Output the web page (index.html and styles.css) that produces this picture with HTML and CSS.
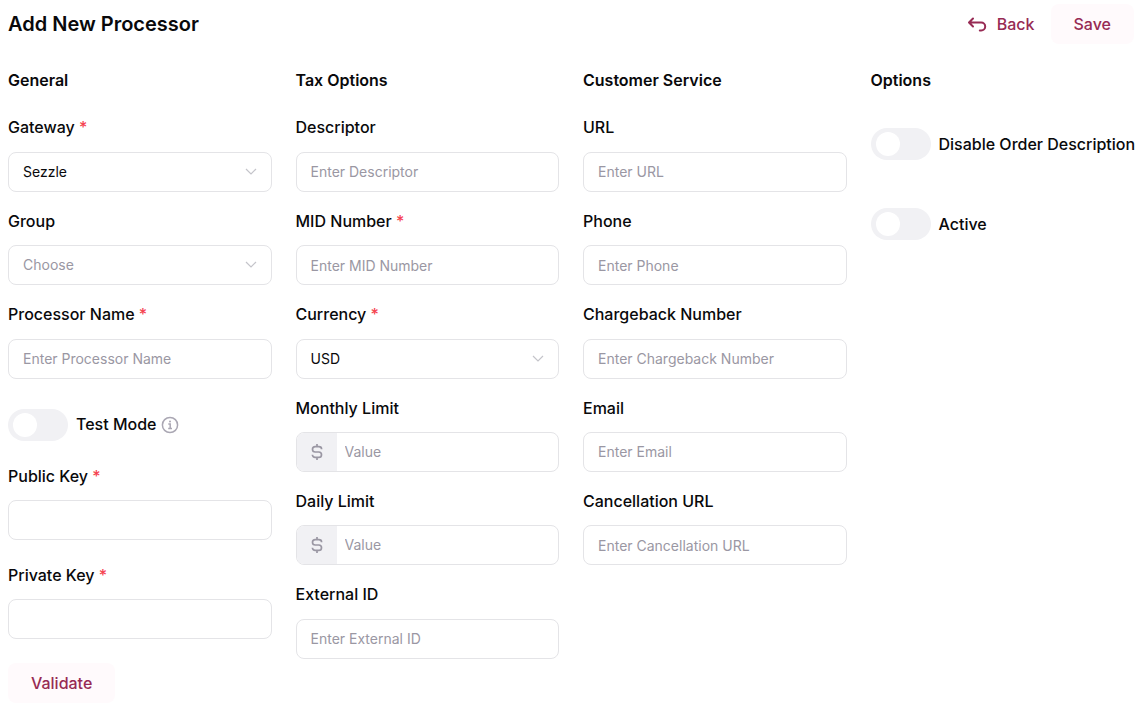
FILE: index.html
```html
<!DOCTYPE html>
<html lang="en">
<head>
<meta charset="utf-8">
<meta name="viewport" content="width=device-width, initial-scale=1">
<title>Add New Processor</title>
<link rel="stylesheet" href="styles.css">
</head>
<body>
<form class="page">
  <header class="topbar">
    <h1 class="title">Add New Processor</h1>
    <div class="actions">
      <button type="button" class="btn btn-back">
        <svg class="icon-back" viewBox="0 0 20 20" aria-hidden="true"><path d="M6 4.5 2 8.5l4 4M2.4 8.5h11.8a4 4 0 0 1 0 8H12.8"/></svg>
        Back
      </button>
      <button type="submit" class="btn btn-soft">Save</button>
    </div>
  </header>

  <main class="columns">
    <section class="column">
      <h2 class="heading">General</h2>
      <div class="field">
        <label class="label" for="gateway">Gateway <span class="required">*</span></label>
        <div class="select-wrap">
          <select class="control select" id="gateway"><option>Sezzle</option></select>
          <svg class="chevron" viewBox="0 0 12 8" aria-hidden="true"><path d="m1 1 5 5 5-5"/></svg>
        </div>
      </div>
      <div class="field">
        <label class="label" for="group">Group</label>
        <div class="select-wrap">
          <select class="control select select-empty" id="group"><option value="">Choose</option></select>
          <svg class="chevron" viewBox="0 0 12 8" aria-hidden="true"><path d="m1 1 5 5 5-5"/></svg>
        </div>
      </div>
      <div class="field">
        <label class="label" for="name">Processor Name <span class="required">*</span></label>
        <input class="control" id="name" type="text" placeholder="Enter Processor Name">
      </div>
      <div class="keys">
        <div class="toggle-row">
          <input class="toggle" id="test-mode" type="checkbox" role="switch">
          <label for="test-mode">Test Mode</label>
          <svg class="icon-info" viewBox="0 0 18 18" aria-hidden="true"><circle cx="9" cy="9" r="7.6"/><path d="M7.3 8h1.9v4.3M7.2 12.4h3.8"/><circle class="dot" cx="9" cy="5.5" r="1"/></svg>
        </div>
        <div class="field">
          <label class="label" for="public-key">Public Key <span class="required">*</span></label>
          <input class="control" id="public-key" type="text">
        </div>
        <div class="field">
          <label class="label" for="private-key">Private Key <span class="required">*</span></label>
          <input class="control" id="private-key" type="text">
        </div>
        <button type="button" class="btn btn-soft">Validate</button>
      </div>
    </section>

    <section class="column">
      <h2 class="heading">Tax Options</h2>
      <div class="field">
        <label class="label" for="descriptor">Descriptor</label>
        <input class="control" id="descriptor" type="text" placeholder="Enter Descriptor">
      </div>
      <div class="field">
        <label class="label" for="mid">MID Number <span class="required">*</span></label>
        <input class="control" id="mid" type="text" placeholder="Enter MID Number">
      </div>
      <div class="field">
        <label class="label" for="currency">Currency <span class="required">*</span></label>
        <div class="select-wrap">
          <select class="control select" id="currency"><option>USD</option></select>
          <svg class="chevron" viewBox="0 0 12 8" aria-hidden="true"><path d="m1 1 5 5 5-5"/></svg>
        </div>
      </div>
      <div class="field">
        <label class="label" for="monthly">Monthly Limit</label>
        <div class="control money">
          <span class="prefix"><svg class="icon-dollar" viewBox="0 0 12 18" aria-hidden="true"><path d="M6 1v2.6M6 14.4V17M10.6 6.2c0-1.5-1.2-2.6-2.7-2.6H4.2a2.7 2.7 0 0 0 0 5.4h3.6a2.7 2.7 0 0 1 0 5.4H4.1c-1.5 0-2.7-1.1-2.7-2.6"/></svg></span>
          <input class="money-input" id="monthly" type="text" placeholder="Value">
        </div>
      </div>
      <div class="field">
        <label class="label" for="daily">Daily Limit</label>
        <div class="control money">
          <span class="prefix"><svg class="icon-dollar" viewBox="0 0 12 18" aria-hidden="true"><path d="M6 1v2.6M6 14.4V17M10.6 6.2c0-1.5-1.2-2.6-2.7-2.6H4.2a2.7 2.7 0 0 0 0 5.4h3.6a2.7 2.7 0 0 1 0 5.4H4.1c-1.5 0-2.7-1.1-2.7-2.6"/></svg></span>
          <input class="money-input" id="daily" type="text" placeholder="Value">
        </div>
      </div>
      <div class="field">
        <label class="label" for="external">External ID</label>
        <input class="control" id="external" type="text" placeholder="Enter External ID">
      </div>
    </section>

    <section class="column">
      <h2 class="heading">Customer Service</h2>
      <div class="field">
        <label class="label" for="url">URL</label>
        <input class="control" id="url" type="text" placeholder="Enter URL">
      </div>
      <div class="field">
        <label class="label" for="phone">Phone</label>
        <input class="control" id="phone" type="text" placeholder="Enter Phone">
      </div>
      <div class="field">
        <label class="label" for="chargeback">Chargeback Number</label>
        <input class="control" id="chargeback" type="text" placeholder="Enter Chargeback Number">
      </div>
      <div class="field">
        <label class="label" for="email">Email</label>
        <input class="control" id="email" type="text" placeholder="Enter Email">
      </div>
      <div class="field">
        <label class="label" for="cancel-url">Cancellation URL</label>
        <input class="control" id="cancel-url" type="text" placeholder="Enter Cancellation URL">
      </div>
    </section>

    <section class="column">
      <h2 class="heading">Options</h2>
      <div class="options">
        <div class="toggle-row">
          <input class="toggle" id="disable-desc" type="checkbox" role="switch">
          <label for="disable-desc">Disable Order Description</label>
        </div>
        <div class="toggle-row">
          <input class="toggle" id="active" type="checkbox" role="switch">
          <label for="active">Active</label>
        </div>
      </div>
    </section>
  </main>
</form>
</body>
</html>
```
FILE: styles.css
```css
*,
*::before {
  box-sizing: border-box;
}

body {
  margin: 0;
  background: #fff;
  color: #09090b;
  font: 500 16px/1.4 Inter, "Liberation Sans", sans-serif;
}

.page {
  padding: 4px 6px 4px 8px;
}

.topbar,
.actions {
  display: flex;
  align-items: center;
}

.topbar {
  justify-content: space-between;
}

.title,
.heading {
  margin: 0;
  font-weight: 600;
}

.title {
  font-size: 20px;
}

.heading {
  margin-bottom: 7px;
  font-size: 16px;
}

.btn {
  height: 40px;
  padding: 0 23px;
  border: 0;
  border-radius: 8px;
  background: none;
  color: #972b54;
  font: inherit;
  cursor: pointer;
}

.btn-soft {
  background: #fffafc;
}

.btn-back {
  display: flex;
  align-items: center;
  gap: 10px;
  padding: 0 16px;
}

.icon-back {
  width: 20px;
  height: 20px;
  fill: none;
  stroke: currentColor;
  stroke-width: 2;
  stroke-linecap: round;
  stroke-linejoin: round;
}

.columns {
  display: grid;
  grid-template-columns: repeat(4, minmax(0, 1fr));
  gap: 24px;
  margin-top: 25px;
}

.column {
  display: flex;
  flex-direction: column;
  gap: 18px;
}

.field {
  display: flex;
  flex-direction: column;
  gap: 13px;
}

.required {
  color: #f5424f;
}

.control {
  width: 100%;
  height: 40px;
  padding: 0 14px;
  border: 1px solid #e4e4e7;
  border-radius: 8px;
  background: #fff;
  color: inherit;
  font: 400 14px/20px Inter, "Liberation Sans", sans-serif;
}

::placeholder {
  color: #9a97a3;
  opacity: 1;
}

.select-wrap {
  display: grid;
  align-items: center;
}

.select-wrap > * {
  grid-area: 1 / 1;
}

.select {
  appearance: none;
}

.select-empty {
  color: #9a97a3;
}

.chevron {
  justify-self: end;
  width: 12px;
  height: 8px;
  margin-right: 15px;
  fill: none;
  stroke: #c4c4ca;
  stroke-width: 1.2;
  pointer-events: none;
}

.money {
  display: flex;
  padding: 0;
  overflow: hidden;
}

.prefix {
  display: grid;
  flex: none;
  place-items: center;
  width: 40px;
  background: #f1f1f4;
}

.icon-dollar {
  width: 12px;
  height: 18px;
  fill: none;
  stroke: #9a97a3;
  stroke-width: 1.7;
}

.money-input {
  flex: 1;
  min-width: 0;
  padding: 0 8px;
  border: 0;
  background: none;
  color: inherit;
  font: inherit;
}

.keys {
  display: flex;
  flex-direction: column;
  align-items: flex-start;
  gap: 24px;
  padding-top: 12px;
}

.keys .field {
  width: 100%;
}

.toggle-row {
  display: flex;
  align-items: center;
  white-space: nowrap;
}

.toggle {
  flex: none;
  width: 60px;
  height: 32px;
  margin: 0 8px 0 0;
  padding: 4px 5px;
  border-radius: 16px;
  appearance: none;
  background: #f1f1f4;
  cursor: pointer;
}

.toggle::before {
  display: block;
  width: 24px;
  height: 24px;
  border-radius: 50%;
  background: #fff;
  content: "";
}

.toggle:checked {
  padding-left: 31px;
  background: #972b54;
}

.icon-info {
  width: 18px;
  height: 18px;
  margin-left: 5px;
  fill: none;
  stroke: #aaa7b3;
  stroke-width: 1.5;
}

.icon-info .dot {
  fill: #aaa7b3;
  stroke: none;
}

.options {
  display: flex;
  flex-direction: column;
  gap: 48px;
  padding-top: 12px;
}
```
